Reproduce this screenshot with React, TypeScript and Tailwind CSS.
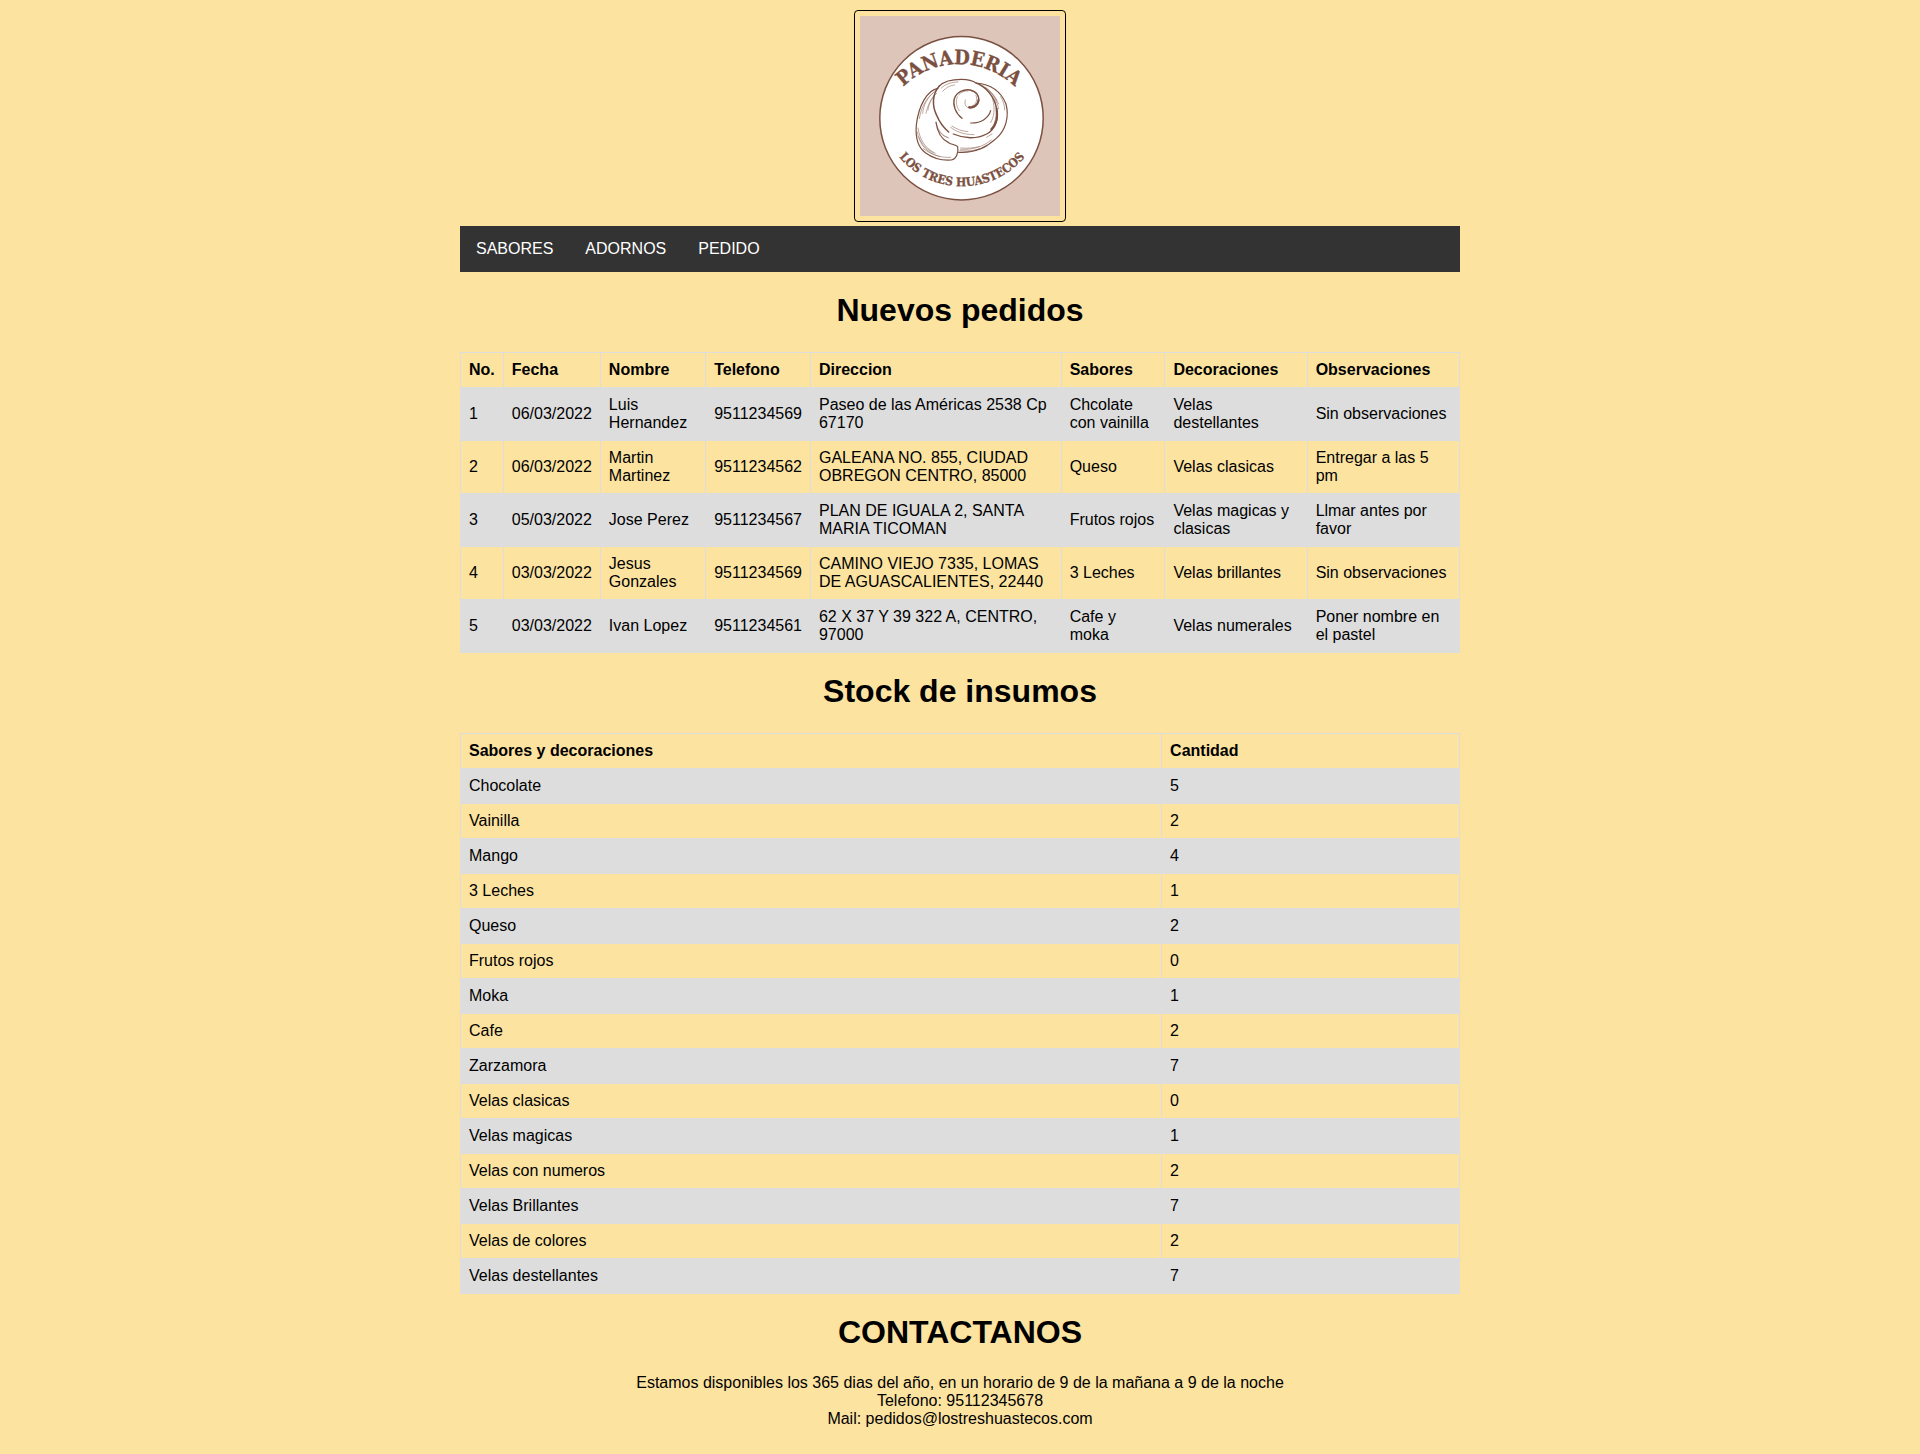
const brown = "#7b5040";

function Logo() {
  return (
    <svg viewBox="0 0 200 200" role="img" aria-label="Panaderia Los Tres Huastecos" className="block size-[200px] bg-[#dec5ba]">
      <defs>
        <path id="arc-top" d="M33 83 A80 80 0 0 1 165 83" />
        <path id="arc-bottom" d="M36 137 A82 82 0 0 0 168 137" />
      </defs>
      <circle cx="101.5" cy="102.2" r="81.7" fill="#fff" stroke={brown} strokeWidth="1.5" />
      <g fill={brown} stroke={brown} strokeWidth="0.3" fontFamily="'DejaVu Serif Condensed', 'DejaVu Serif', serif" fontWeight="700" textAnchor="middle">
        <text fontSize="20">
          <textPath href="#arc-top" startOffset="50%">PANADERIA</textPath>
        </text>
        <text fontSize="12">
          <textPath href="#arc-bottom" startOffset="50%">LOS TRES HUASTECOS</textPath>
        </text>
      </g>
      <g transform="translate(-20 -16) scale(0.3333)" fill="none" stroke={brown} strokeWidth="3.6" strokeLinecap="round" strokeLinejoin="round">
        <path d="M294 265 C262 270 236 316 229 375 C226 410 234 442 256 458 C278 474 308 482 334 480 C350 478 356 456 353 440 C346 434 336 434 326 428 C304 418 292 398 288 366" />
        <path d="M298 258 C312 244 336 238 364 238 C384 238 398 241 408 249 C448 252 482 272 498 312 C508 350 498 390 468 416 C440 442 400 460 356 457" />
        <path d="M298 258 C276 282 276 318 290 346 C298 366 312 384 326 396" strokeWidth="4.5" />
        <path d="M408 249 C440 262 462 290 469 322 C478 356 466 388 440 402 C410 418 372 416 340 402" strokeWidth="4" />
        <path d="M366 355 C346 340 338 314 343 296 C350 276 372 267 390 270 C410 274 420 290 415 306 C410 320 398 326 386 322" strokeWidth="4" />
        <path d="M452 332 C446 354 424 370 392 369" />
        <path d="M416 300 C414 314 402 324 388 321" strokeWidth="6" />
        <path d="M470 326 C474 350 468 374 454 388" strokeWidth="6" />
      </g>
      <g transform="translate(-20 -16) scale(0.3333)" fill="none" stroke={brown} strokeWidth="2" strokeLinecap="round" opacity="0.75">
        <path d="M288 272 C262 290 250 316 248 340 M280 278 C254 298 242 330 238 356 M290 280 C270 298 266 318 264 330 M284 284 C268 304 262 322 258 340" />
        <path d="M232 396 C238 436 262 460 300 470 M234 384 C240 424 258 446 286 460 M250 446 C276 466 306 474 332 472 M236 410 C246 436 262 450 280 458" />
        <path d="M304 264 C316 252 336 246 354 246 M308 274 C320 260 334 256 344 255" />
        <path d="M420 256 C446 266 464 286 476 312 M426 256 C452 270 468 292 476 326 M436 262 C450 272 462 284 470 300" />
        <path d="M464 300 C470 320 472 352 460 378 M458 296 C466 330 462 350 452 368 M482 290 C490 302 494 316 494 330" />
        <path d="M288 370 C296 394 306 406 326 414 M292 384 C300 400 308 408 322 412 M332 382 C350 396 372 404 402 404 M336 378 C350 388 366 394 384 395" />
        <path d="M362 448 C398 450 430 440 454 420 M360 452 C390 455 420 450 442 438 M440 412 L456 402 M362 444 C382 446 402 444 418 440" />
        <path d="M376 300 C372 314 378 324 392 326 M408 286 C414 300 408 314 396 318 M352 290 C346 306 350 322 358 332 M356 284 C364 276 374 272 384 273" />
      </g>
    </svg>
  );
}

const navLinks = ["SABORES", "ADORNOS", "PEDIDO"];

const orderColumns = ["No.", "Fecha", "Nombre", "Telefono", "Direccion", "Sabores", "Decoraciones", "Observaciones"];

const orders = [
  ["1", "06/03/2022", "Luis Hernandez", "9511234569", "Paseo de las Américas 2538 Cp 67170", "Chcolate con vainilla", "Velas destellantes", "Sin observaciones"],
  ["2", "06/03/2022", "Martin Martinez", "9511234562", "GALEANA NO. 855, CIUDAD OBREGON CENTRO, 85000", "Queso", "Velas clasicas", "Entregar a las 5 pm"],
  ["3", "05/03/2022", "Jose Perez", "9511234567", "PLAN DE IGUALA 2, SANTA MARIA TICOMAN", "Frutos rojos", "Velas magicas y clasicas", "Llmar antes por favor"],
  ["4", "03/03/2022", "Jesus Gonzales", "9511234569", "CAMINO VIEJO 7335, LOMAS DE AGUASCALIENTES, 22440", "3 Leches", "Velas brillantes", "Sin observaciones"],
  ["5", "03/03/2022", "Ivan Lopez", "9511234561", "62 X 37 Y 39 322 A, CENTRO, 97000", "Cafe y moka", "Velas numerales", "Poner nombre en el pastel"],
];

const stockColumns = ["Sabores y decoraciones", "Cantidad"];

const stock = [
  ["Chocolate", "5"],
  ["Vainilla", "2"],
  ["Mango", "4"],
  ["3 Leches", "1"],
  ["Queso", "2"],
  ["Frutos rojos", "0"],
  ["Moka", "1"],
  ["Cafe", "2"],
  ["Zarzamora", "7"],
  ["Velas clasicas", "0"],
  ["Velas magicas", "1"],
  ["Velas con numeros", "2"],
  ["Velas Brillantes", "7"],
  ["Velas de colores", "2"],
  ["Velas destellantes", "7"],
];

function Heading({ id, children }: { id: string; children: string }) {
  return (
    <h1 id={id} className="pt-5 pb-6 text-center text-[32px] leading-9 font-bold">
      {children}
    </h1>
  );
}

function DataTable({ labelledBy, columns, rows }: { labelledBy: string; columns: string[]; rows: string[][] }) {
  return (
    <table aria-labelledby={labelledBy} className="w-full border-collapse text-left">
      <thead>
        <tr>
          {columns.map((column) => (
            <th key={column} scope="col" className="border border-[#dddddd] p-2 font-bold">
              {column}
            </th>
          ))}
        </tr>
      </thead>
      <tbody>
        {rows.map((row) => (
          <tr key={row[0]} className="odd:bg-[#dddddd]">
            {row.map((cell, i) => (
              <td key={i} className="border border-[#dddddd] p-2">
                {cell}
              </td>
            ))}
          </tr>
        ))}
      </tbody>
    </table>
  );
}

export default function App() {
  return (
    <div className="min-h-screen bg-[#fce3a0] px-2 pt-[10px] pb-6 font-['Liberation_Sans',Arial,sans-serif] text-base leading-[18px] text-black">
      <div className="mx-auto max-w-[1000px]">
        <header>
          <div className="mx-auto mb-1 w-fit rounded-[4px] border border-black p-[5px]">
            <Logo />
          </div>
          <nav className="flex bg-[#333333]">
            {navLinks.map((link) => (
              <a key={link} href="#" className="px-4 py-3.5 text-white">
                {link}
              </a>
            ))}
          </nav>
        </header>
        <main>
          <Heading id="pedidos">Nuevos pedidos</Heading>
          <DataTable labelledBy="pedidos" columns={orderColumns} rows={orders} />
          <Heading id="stock">Stock de insumos</Heading>
          <DataTable labelledBy="stock" columns={stockColumns} rows={stock} />
        </main>
        <footer className="text-center">
          <Heading id="contacto">CONTACTANOS</Heading>
          <p>Estamos disponibles los 365 dias del año, en un horario de 9 de la mañana a 9 de la noche</p>
          <p>Telefono: 95112345678</p>
          <p>Mail: pedidos@lostreshuastecos.com</p>
        </footer>
      </div>
    </div>
  );
}
